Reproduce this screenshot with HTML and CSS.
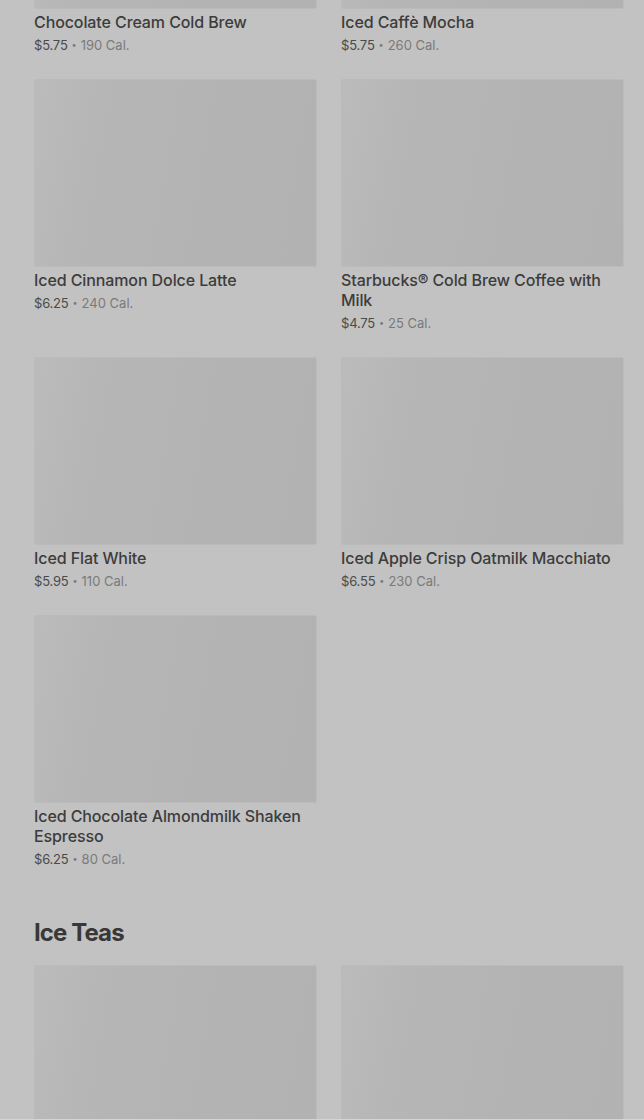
FILE: index.html
```html
<!DOCTYPE html>
<html lang="en">
<head>
<meta charset="utf-8">
<title>Menu</title>
<link rel="stylesheet" href="styles.css">
</head>
<body>
<main class="menu">
  <section class="section">
    <div class="grid">
      <div class="card">
        <div class="thumb"></div>
        <div class="name">Chocolate Cream Cold Brew</div>
        <div class="meta"><span class="price">$5.75</span><span class="dot">•</span><span class="cal">190 Cal.</span></div>
      </div>
      <div class="card">
        <div class="thumb"></div>
        <div class="name">Iced Caffè Mocha</div>
        <div class="meta"><span class="price">$5.75</span><span class="dot">•</span><span class="cal">260 Cal.</span></div>
      </div>
      <div class="card">
        <div class="thumb"></div>
        <div class="name">Iced Cinnamon Dolce Latte</div>
        <div class="meta"><span class="price">$6.25</span><span class="dot">•</span><span class="cal">240 Cal.</span></div>
      </div>
      <div class="card">
        <div class="thumb"></div>
        <div class="name">Starbucks® Cold Brew Coffee with Milk</div>
        <div class="meta"><span class="price">$4.75</span><span class="dot">•</span><span class="cal">25 Cal.</span></div>
      </div>
      <div class="card">
        <div class="thumb"></div>
        <div class="name">Iced Flat White</div>
        <div class="meta"><span class="price">$5.95</span><span class="dot">•</span><span class="cal">110 Cal.</span></div>
      </div>
      <div class="card">
        <div class="thumb"></div>
        <div class="name">Iced Apple Crisp Oatmilk Macchiato</div>
        <div class="meta"><span class="price">$6.55</span><span class="dot">•</span><span class="cal">230 Cal.</span></div>
      </div>
      <div class="card">
        <div class="thumb"></div>
        <div class="name">Iced Chocolate Almondmilk Shaken Espresso</div>
        <div class="meta"><span class="price">$6.25</span><span class="dot">•</span><span class="cal">80 Cal.</span></div>
      </div>
    </div>
  </section>
  <section class="section">
    <h2 class="heading">Ice Teas</h2>
    <div class="grid">
      <div class="card">
        <div class="thumb"></div>
      </div>
      <div class="card">
        <div class="thumb"></div>
      </div>
    </div>
  </section>
</main>
</body>
</html>
```
FILE: styles.css
```css
html, body {
  margin: 0;
  padding: 0;
  background: #c2c2c2;
  overflow: hidden;
}
body {
  font-family: Inter, "Noto Sans", "Liberation Sans", sans-serif;
  color: #3b3b3b;
}
.menu {
  margin-top: -179px;
  padding: 0 20px 0 34px;
}
.grid {
  display: grid;
  grid-template-columns: 283px 283px;
  column-gap: 24px;
  row-gap: 24px;
  align-items: start;
}
.thumb {
  height: 188px;
  box-sizing: border-box;
  border: 1px solid #bbbbbb;
  border-radius: 2px;
  background: linear-gradient(100deg, #bbbbbb 0%, #b6b6b6 22%, #b3b3b3 60%, #b2b2b2 100%);
}
.name {
  margin-top: 3px;
  font-size: 16px;
  line-height: 20px;
  font-weight: 500;
  color: #3c3c3c;
  letter-spacing: -0.1px;
}
.meta {
  display: flex;
  align-items: center;
  height: 20px;
  margin-top: 3px;
  font-size: 13px;
  line-height: 20px;
  color: #7a7a7a;
}
.price {
  color: #4a4a4a;
  letter-spacing: -0.2px;
}
.dot {
  font-size: 9px;
  line-height: 20px;
  margin: 0 4px;
  color: #7a7a7a;
}
.heading {
  margin: 48px 0 16px;
  font-size: 24px;
  line-height: 32px;
  font-weight: 700;
  color: #383838;
  letter-spacing: -0.9px;
}
```
